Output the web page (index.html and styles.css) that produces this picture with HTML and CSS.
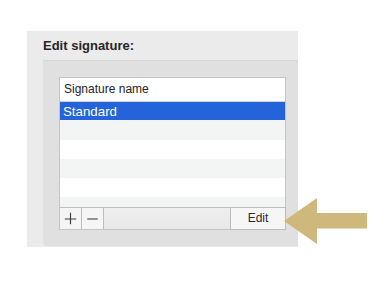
FILE: index.html
```html
<!DOCTYPE html>
<html>
<head>
<meta charset="utf-8">
<link rel="stylesheet" href="styles.css">
</head>
<body>
<div class="panel">
  <div class="title">Edit signature:</div>
  <div class="box">
    <div class="list">
      <div class="list-head">Signature name</div>
      <div class="list-body">
        <div class="row selected">Standard</div>
        <div class="row alt r1"></div>
        <div class="row"></div>
        <div class="row alt"></div>
        <div class="row"></div>
        <div class="row alt last"></div>
      </div>
      <div class="bar">
        <button class="sq add" aria-label="Add">
          <svg width="22" height="20" viewBox="0 0 22 20"><path d="M11 4.5V16.5M5 11H17" stroke="#3a3a3a" stroke-width="1.2" fill="none"/></svg>
        </button>
        <button class="sq remove" aria-label="Remove">
          <svg width="22" height="20" viewBox="0 0 22 20"><path d="M5.5 11H16.5" stroke="#8e8e8e" stroke-width="2" fill="none"/></svg>
        </button>
        <div class="spacer"></div>
        <button class="edit">Edit</button>
      </div>
    </div>
  </div>
</div>
<svg class="arrow" width="390" height="285" viewBox="0 0 390 285">
  <polygon points="284,221 317,198 317,213 367,213 367,228.5 317,228.5 317,244" fill="#cfb87b"/>
</svg>
</body>
</html>
```

FILE: styles.css
```css
html, body {
  margin: 0;
  padding: 0;
  background: #ffffff;
}
body {
  font-family: "Liberation Sans", Arial, sans-serif;
  width: 390px;
  height: 285px;
  overflow: hidden;
  position: relative;
}
.panel {
  margin-left: 27px;
  margin-top: 31px;
  width: 271px;
  height: 216px;
  box-sizing: border-box;
  padding-top: 6px;
  background: #ebebeb;
  display: flex;
  flex-direction: column;
}
.title {
  padding-left: 16px;
  font-size: 13px;
  font-weight: bold;
  line-height: 17px;
  color: #262626;
}
.box {
  margin-top: 6px;
  margin-left: 16px;
  height: 186px;
  box-sizing: border-box;
  background: #e0e0e0;
  border-top: 1px solid #d6d6d6;
  border-bottom-left-radius: 4px;
  padding: 16px 12px 16px 16px;
}
.list {
  border: 1px solid #c4c4c4;
  background: #ffffff;
  display: flex;
  flex-direction: column;
}
.list-head {
  height: 23px;
  line-height: 23px;
  padding-left: 4px;
  font-size: 12px;
  color: #222222;
  border-bottom: 1px solid #d3d3d3;
}
.list-body {
  height: 105px;
  display: flex;
  flex-direction: column;
  overflow: hidden;
}
.row {
  height: 19px;
  flex: none;
  background: #ffffff;
}
.row.alt {
  background: #f3f4f4;
}
.row.r1 {
  height: 20px;
}
.row.last {
  flex: 1;
}
.row.selected {
  height: 18px;
  box-sizing: border-box;
  padding-top: 2px;
  padding-left: 3px;
  line-height: 16px;
  font-size: 13.3px;
  color: #ffffff;
  background: #2463d9;
}
.bar {
  height: 21px;
  border-top: 1px solid #bdbdbd;
  background: linear-gradient(#efefef, #e8e8e8);
  display: flex;
}
.sq {
  width: 22px;
  height: 21px;
  padding: 0;
  margin: 0;
  border: none;
  border-right: 1px solid #bdbdbd;
  background: #f5f5f5;
  display: flex;
  align-items: flex-start;
  justify-content: center;
}
.sq svg {
  display: block;
}
.spacer {
  flex: 1;
}
.edit {
  width: 56px;
  height: 23px;
  margin: -1px -1px -1px 0;
  padding: 0;
  border: 1px solid #bcbcbc;
  background: #f6f6f6;
  font-family: "Liberation Sans", Arial, sans-serif;
  font-size: 12px;
  color: #2a2a2a;
  line-height: 21px;
  text-align: center;
}
.arrow {
  position: absolute;
  left: 0;
  top: 0;
  pointer-events: none;
}
```
